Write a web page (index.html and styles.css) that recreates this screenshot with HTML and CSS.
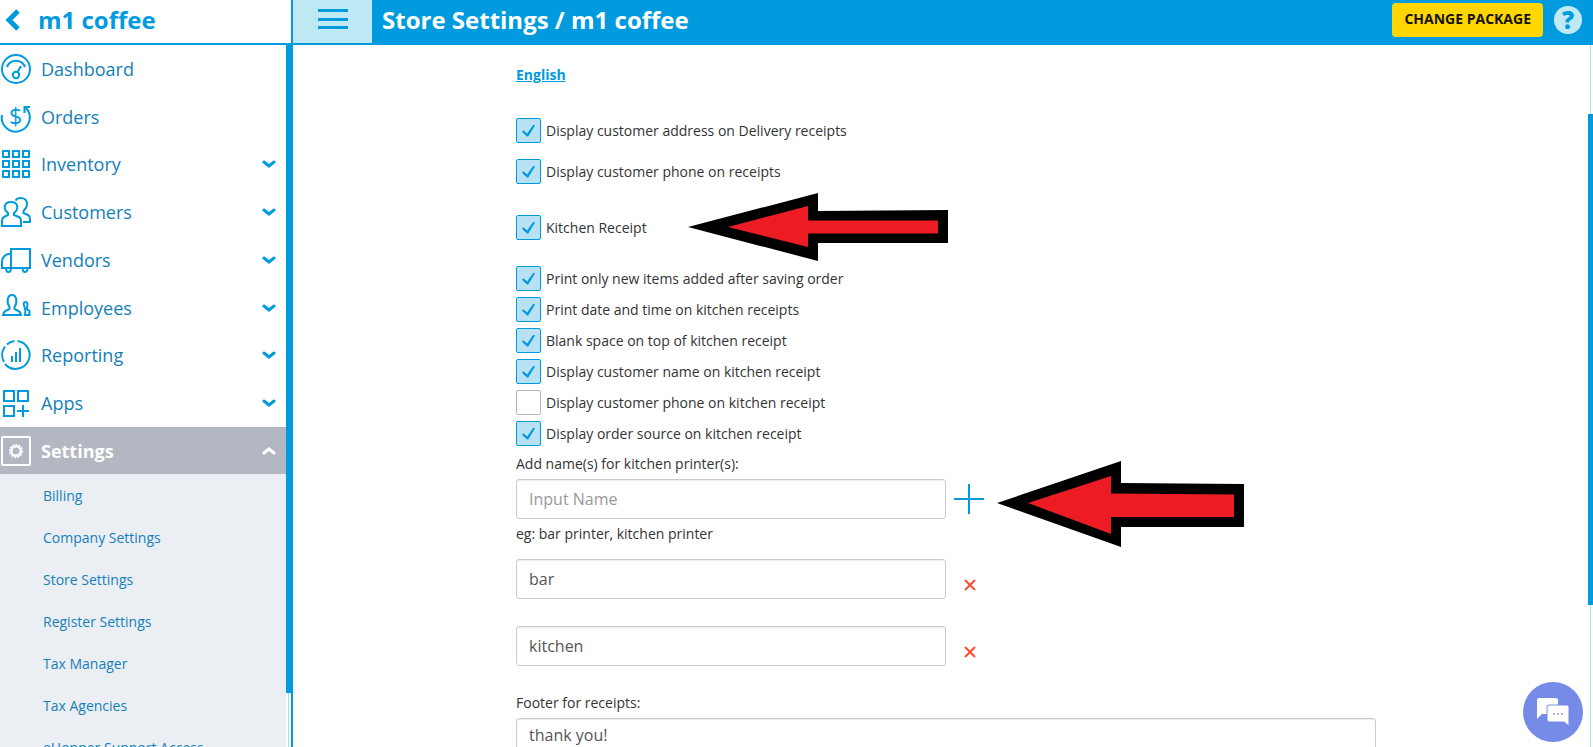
FILE: index.html
```
<!DOCTYPE html>
<html lang="en">
<head>
  <meta charset="UTF-8">
  <title>Store Settings / m1 coffee</title>
  <link rel="stylesheet" href="styles.css">
</head>
<body>
  <aside class="sidebar">
    <a class="store-link" href="#">
      <svg class="back-icon" viewBox="0 0 16 22"><path d="M14 2L5 11l9 9"/></svg>
      m1 coffee
    </a>
    <div class="sidebar-body">
      <nav class="nav">
        <div class="nav-main">
          <a class="nav-item" href="#">
            <svg class="nav-icon" viewBox="0 0 30 30"><circle cx="15" cy="15" r="14"/><path d="M6 13C9 4.500 21 4.500 24 13M16.500 18L20 12"/><circle cx="15" cy="21" r="3.200"/></svg>
            <span>Dashboard</span>
          </a>
          <a class="nav-item" href="#">
            <svg class="nav-icon" viewBox="0 0 30 30"><path d="M1 13A14 14 0 1 0 25 6M23.500 11V5H29"/><text x="8" y="23">$</text></svg>
            <span>Orders</span>
          </a>
          <a class="nav-item" href="#">
            <svg class="nav-icon" viewBox="0 0 30 30"><path d="M2 2h6v6H2zM12 2h6v6h-6zM22 2h6v6h-6zM2 12h6v6H2zM12 12h6v6h-6zM22 12h6v6h-6zM2 22h6v6H2zM12 22h6v6h-6zM22 22h6v6h-6z"/></svg>
            <span>Inventory</span>
            <svg class="chevron" viewBox="0 0 14 10"><path d="M2 3l5 4 5-4"/></svg>
          </a>
          <a class="nav-item" href="#">
            <svg class="nav-icon" viewBox="0 0 30 30"><path d="M7 18v-2C2 12 2.500 5 10 5s8 7 3 11v2l5 2q2 1 2 4v5H1v-5q0-3 2-4z"/><path d="M14.500 3.500C17-.5 26 0 26 7q0 4-3.500 7v2l4.500 2q2 1 2 4v3h-7"/></svg>
            <span>Customers</span>
            <svg class="chevron" viewBox="0 0 14 10"><path d="M2 3l5 4 5-4"/></svg>
          </a>
          <a class="nav-item" href="#">
            <svg class="nav-icon" viewBox="0 0 30 30"><path d="M10 4h19v19H10zM10 9H7Q1 11 1 17v6h9"/><path d="M5 23q0 4 2.500 4t2.500-4M21.500 23q0 4 2.500 4t2.500-4"/></svg>
            <span>Vendors</span>
            <svg class="chevron" viewBox="0 0 14 10"><path d="M2 3l5 4 5-4"/></svg>
          </a>
          <a class="nav-item" href="#">
            <svg class="nav-icon" viewBox="0 0 30 30"><path d="M8.500 14C5.500 10 6 2 11 2s5.500 8 2.500 12v2l4 2q2 1 2.500 4H2q.5-3 2.500-4l4-2z"/><path d="M23.500 14q-2-5 1-5t1.500 5q-.5 3 2.500 4v4H24q1-5-.5-8z"/></svg>
            <span>Employees</span>
            <svg class="chevron" viewBox="0 0 14 10"><path d="M2 3l5 4 5-4"/></svg>
          </a>
          <a class="nav-item" href="#">
            <svg class="nav-icon" viewBox="0 0 30 30"><path d="M16.500 1A14 14 0 1 1 4 24M3 22A14 14 0 0 1 4 6.500M6 4.500A14 14 0 0 1 13.500 1M11 22v-6M15 22V12M19 22V8"/></svg>
            <span>Reporting</span>
            <svg class="chevron" viewBox="0 0 14 10"><path d="M2 3l5 4 5-4"/></svg>
          </a>
          <a class="nav-item" href="#">
            <svg class="nav-icon" viewBox="0 0 30 30"><path d="M3 3h10v10H3zM17 3h10v10H17zM3 18h10v10H3zM22 17v12M16 23h12"/></svg>
            <span>Apps</span>
            <svg class="chevron" viewBox="0 0 14 10"><path d="M2 3l5 4 5-4"/></svg>
          </a>
        </div>
        <a class="nav-item active" href="#">
          <svg class="nav-icon" viewBox="0 0 30 30"><rect x="1" y="1" width="28" height="28" rx="1"/><circle cx="15" cy="15" r="4.500"/><circle class="gear-teeth" cx="15" cy="15" r="6"/></svg>
          <span>Settings</span>
          <svg class="chevron" viewBox="0 0 14 10"><path d="M2 7l5-4 5 4"/></svg>
        </a>
        <div class="subnav">
          <a href="#">Billing</a>
          <a href="#">Company Settings</a>
          <a href="#">Store Settings</a>
          <a href="#">Register Settings</a>
          <a href="#">Tax Manager</a>
          <a href="#">Tax Agencies</a>
          <a href="#">eHopper Support Access</a>
        </div>
      </nav>
      <div class="scrollbar sidebar-scrollbar"><div class="thumb"></div><div class="track"></div></div>
    </div>
  </aside>

  <div class="page">
    <header class="topbar">
      <button class="menu-button" aria-label="Toggle menu">
        <svg viewBox="0 0 30 20"><path d="M0 0h30v3H0zM0 9h30v3H0zM0 17h30v3H0z"/></svg>
      </button>
      <h1>Store Settings / m1 coffee</h1>
      <button class="package-button">CHANGE PACKAGE</button>
      <button class="help-button" aria-label="Help">?</button>
    </header>

    <div class="page-body">
      <main class="content">
        <form class="settings-form">
          <a class="language" href="#">English</a>

          <div class="group group-customer">
            <label class="check"><input type="checkbox" checked> Display customer address on Delivery receipts</label>
            <label class="check"><input type="checkbox" checked> Display customer phone on receipts</label>
          </div>

          <label class="check check-kitchen"><input type="checkbox" checked> Kitchen Receipt</label>

          <div class="group">
            <label class="check"><input type="checkbox" checked> Print only new items added after saving order</label>
            <label class="check"><input type="checkbox" checked> Print date and time on kitchen receipts</label>
            <label class="check"><input type="checkbox" checked> Blank space on top of kitchen receipt</label>
            <label class="check"><input type="checkbox" checked> Display customer name on kitchen receipt</label>
            <label class="check"><input type="checkbox"> Display customer phone on kitchen receipt</label>
            <label class="check"><input type="checkbox" checked> Display order source on kitchen receipt</label>
          </div>

          <label class="field-label" for="printerName">Add name(s) for kitchen printer(s):</label>
          <div class="field-row">
            <input type="text" id="printerName" placeholder="Input Name">
            <button type="button" class="icon-button" aria-label="Add printer">
              <svg class="plus" viewBox="0 0 30 30"><path d="M15 0v30M0 15h30"/></svg>
            </button>
          </div>
          <p class="hint">eg: bar printer, kitchen printer</p>

          <div class="printers">
            <div class="field-row">
              <input type="text" value="bar" aria-label="Printer 1">
              <button type="button" class="icon-button remove" aria-label="Remove bar">
                <svg class="cross" viewBox="0 0 12 12"><path d="M1 1l10 10M11 1L1 11"/></svg>
              </button>
            </div>
            <div class="field-row">
              <input type="text" value="kitchen" aria-label="Printer 2">
              <button type="button" class="icon-button remove" aria-label="Remove kitchen">
                <svg class="cross" viewBox="0 0 12 12"><path d="M1 1l10 10M11 1L1 11"/></svg>
              </button>
            </div>
          </div>

          <label class="field-label" for="footerText">Footer for receipts:</label>
          <textarea id="footerText" rows="3">thank you!</textarea>

          <!-- callout arrows -->
          <svg class="arrow arrow-receipt" viewBox="0 0 260 68"><path class="arrow-edge" d="M0 34L130 0v18l130-1v33H130v18z"/><path class="arrow-fill" d="M40 34l80-21v14.500h130v13H120V54z"/></svg>
          <svg class="arrow arrow-printer" viewBox="0 0 247 86"><path class="arrow-edge" d="M0 42L124 0v22l123 1v43H124v20z"/><path class="arrow-fill" d="M31 42l83-27v17.500l123 1V56H114v17z"/></svg>
        </form>
      </main>
      <div class="scrollbar page-scrollbar"><div class="thumb"></div></div>
    </div>
  </div>

  <button class="chat-button" aria-label="Open chat">
    <svg viewBox="0 0 32 28"><path d="M2 0h17q2 0 2 2v14H5l-5 5V2q0-2 2-2z"/><path class="bubble-front" d="M12 7h18q2 0 2 2v19l-5-4H12q-2 0-2-2V9q0-2 2-2z"/><path class="dots" d="M16 15h2v2h-2zM20 15h2v2h-2zM24 15h2v2h-2z"/></svg>
  </button>
</body>
</html>
```
FILE: styles.css
```
* {
  box-sizing: border-box;
}

body {
  margin: 0;
  height: 100vh;
  display: flex;
  overflow: hidden;
  font-family: "Open Sans", "Noto Sans", sans-serif;
  font-size: 14px;
  line-height: 20px;
  color: #333;
  background: #fff;
}

a {
  color: #1580b8;
  text-decoration: none;
}

button {
  border: none;
  padding: 0;
  background: none;
  font-family: inherit;
  cursor: pointer;
}

/* sidebar */
.sidebar {
  width: 293px;
  flex-shrink: 0;
  display: flex;
  flex-direction: column;
  border-right: 2px solid #009bde;
}

.store-link {
  height: 45px;
  flex-shrink: 0;
  display: flex;
  align-items: center;
  gap: 18px;
  padding: 0 0 4px 4px;
  border-bottom: 2px solid #009bde;
  color: #009bde;
  font-size: 24px;
  font-weight: bold;
}

.back-icon {
  width: 16px;
  height: 22px;
  fill: none;
  stroke: #009bde;
  stroke-width: 5;
}

.sidebar-body {
  flex: 1;
  min-height: 0;
  display: flex;
}

.nav {
  flex: 1;
  overflow: hidden;
}

.nav-main {
  display: grid;
  grid-auto-rows: 1fr;
  height: 382px;
}

.nav-item {
  display: flex;
  align-items: center;
  gap: 10px;
  padding: 0 10px 0 1px;
  font-size: 18px;
}

.nav-icon {
  width: 30px;
  height: 30px;
  overflow: visible;
  fill: none;
  stroke: #009bde;
  stroke-width: 2;
}

.nav-icon text {
  fill: #009bde;
  stroke: none;
  font-size: 23px;
  font-weight: 500;
}

.chevron {
  width: 14px;
  height: 10px;
  margin-left: auto;
  fill: none;
  stroke: #009bde;
  stroke-width: 3;
  stroke-linecap: round;
}

.active {
  height: 47px;
  background: #b3b7c1;
  color: #fff;
  font-weight: bold;
}

.active .nav-icon,
.active .chevron {
  stroke: #fff;
}

.gear-teeth {
  stroke-dasharray: 2 1;
}

.subnav {
  padding-top: 1px;
  background: #ebeff3;
}

.subnav a {
  display: block;
  padding-left: 43px;
  line-height: 42px;
}

/* scrollbars */
.scrollbar {
  width: 5px;
  display: flex;
  flex-direction: column;
  background: linear-gradient(#aadff0, #aadff0) 2px 0 / 1px 100% no-repeat;
}

.thumb {
  background: #009bde;
}

.sidebar-scrollbar .thumb {
  flex: 12;
}

.sidebar-scrollbar .track {
  flex: 1;
}

.page-scrollbar {
  padding: 69px 0 142px;
}

.page-scrollbar .thumb {
  flex: 1;
}

/* top bar */
.page {
  flex: 1;
  min-width: 0;
  display: flex;
  flex-direction: column;
}

.topbar {
  height: 45px;
  flex-shrink: 0;
  display: flex;
  align-items: center;
  padding: 0 11px 6px 0;
  background: #009bde;
}

.menu-button {
  width: 79px;
  height: 43px;
  align-self: flex-start;
  flex-shrink: 0;
  padding-bottom: 6px;
  background: #c0e9f6;
}

.menu-button svg {
  display: block;
  width: 30px;
  height: 20px;
  margin: 0 auto;
  fill: #009bde;
}

h1 {
  margin: 0 auto 0 10px;
  color: #fff;
  font-size: 24px;
  line-height: 38px;
}

.package-button {
  height: 34px;
  margin-right: 11px;
  padding: 0 12px 2px;
  border-radius: 4px;
  background: #ffd600;
  color: #111;
  font-size: 14px;
  font-weight: bold;
}

.help-button {
  width: 28px;
  height: 28px;
  border-radius: 50%;
  background: #c0e9f6;
  color: #009bde;
  font-size: 24px;
  font-weight: 800;
  line-height: 28px;
}

/* form */
.page-body {
  flex: 1;
  min-height: 0;
  display: flex;
}

.content {
  flex: 1;
  min-width: 0;
  overflow: hidden;
  padding: 20px 212px 0 223px;
}

.settings-form {
  position: relative;
  max-width: 860px;
}

.language {
  display: inline-block;
  margin-bottom: 33px;
  color: #009bde;
  font-weight: bold;
  text-decoration: underline;
}

.group {
  display: flex;
  flex-direction: column;
  gap: 6px;
}

.group-customer {
  gap: 16px;
}

.check {
  display: flex;
  align-items: center;
  gap: 5px;
}

.check input {
  appearance: none;
  width: 25px;
  height: 25px;
  margin: 0;
  display: grid;
  place-items: center;
  border: 1px solid #b3b7c1;
  border-radius: 2px;
  background: #fff;
}

.check input:checked {
  border-color: #009bde;
  background: #b8e1f3;
}

.check input:checked::before {
  content: "";
  width: 13px;
  height: 12px;
  background: #009bde;
  clip-path: polygon(0 60%, 10% 48%, 40% 75%, 88% 0, 100% 8%, 48% 100%, 38% 100%);
}

.check-kitchen {
  margin: 31px 0 26px;
}

.field-label {
  display: block;
  margin: 8px 0 5px;
}

.field-row {
  display: flex;
  align-items: center;
  gap: 8px;
}

input[type="text"],
textarea {
  width: 50%;
  height: 40px;
  padding: 0 12px;
  border: 1px solid #ccc;
  border-radius: 3px;
  box-shadow: inset 0 1px 1px rgba(0, 0, 0, 0.08);
  color: #555;
  font-family: inherit;
  font-size: 16px;
}

input::placeholder {
  color: #999;
}

textarea {
  display: block;
  width: 100%;
  height: 80px;
  padding: 5px 12px;
  line-height: 22px;
  resize: none;
}

.icon-button {
  width: 30px;
  height: 30px;
  display: grid;
  place-items: center;
}

.remove {
  height: 28px;
  align-self: flex-end;
}

.plus {
  width: 30px;
  height: 30px;
  stroke: #009bde;
  stroke-width: 2;
}

.cross {
  width: 12px;
  height: 12px;
  margin-left: 2px;
  stroke: #ff4b33;
  stroke-width: 2;
}

.hint {
  margin: 5px 0 15px;
}

.printers {
  display: flex;
  flex-direction: column;
  gap: 27px;
  margin-bottom: 27px;
}

/* callouts */
.arrow {
  position: absolute;
}

.arrow-receipt {
  top: 128px;
  left: 172px;
  width: 260px;
  height: 68px;
}

.arrow-printer {
  top: 396px;
  left: 481px;
  width: 247px;
  height: 86px;
}

.arrow-edge {
  fill: #000;
}

.arrow-fill {
  fill: #ed1c24;
}

/* chat */
.chat-button {
  position: fixed;
  right: 10px;
  bottom: 5px;
  width: 60px;
  height: 60px;
  display: grid;
  place-items: center;
  border-radius: 50%;
  background: #768ae8;
}

.chat-button svg {
  width: 32px;
  height: 28px;
  overflow: visible;
  fill: #fff;
}

.bubble-front {
  stroke: #768ae8;
}

.chat-button .dots {
  fill: #a9b5f1;
}
```
